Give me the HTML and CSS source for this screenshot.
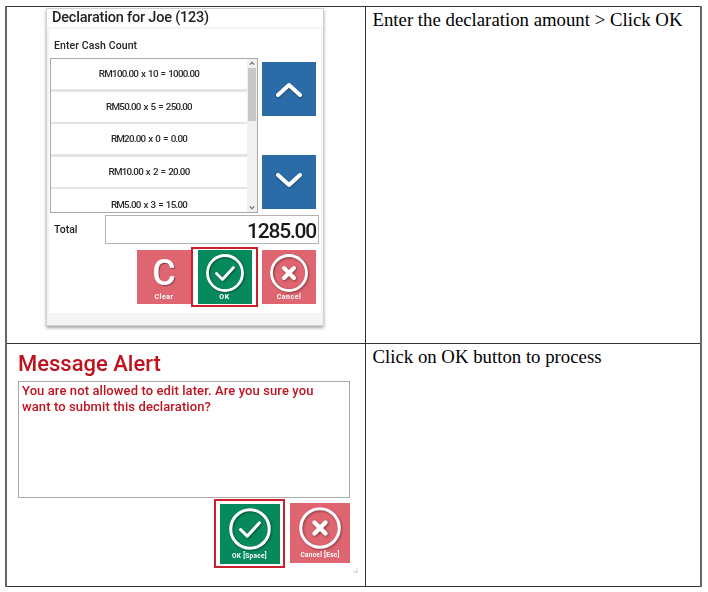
FILE: index.html
```html
<!DOCTYPE html>
<html lang="en">
<head>
    <meta charset="UTF-8">
    <meta name="viewport" content="width=device-width, initial-scale=1.0">
    <title>Declaration steps</title>
    <link rel="stylesheet" href="styles.css">
</head>
<body>
    <table class="steps">
        <tr class="row-first">
            <td class="shot-cell">
                <div class="dialog">
                    <div class="dialog-title">Declaration for Joe (123)</div>
                    <div class="dialog-body">
                        <div class="count-label">Enter Cash Count</div>
                        <div class="count-area">
                            <div class="count-list">
                                <div class="count-items">
                                    <div class="count-item">RM100.00 x 10 = 1000.00</div>
                                    <div class="count-item">RM50.00 x 5 = 250.00</div>
                                    <div class="count-item">RM20.00 x 0 = 0.00</div>
                                    <div class="count-item">RM10.00 x 2 = 20.00</div>
                                    <div class="count-item count-item-cut">RM5.00 x 3 = 15.00</div>
                                </div>
                                <div class="scrollbar">
                                    <svg class="scroll-arrow" viewBox="0 0 8 8"><path d="M2 5l2-2 2 2"></path></svg>
                                    <div class="scroll-track"><div class="scroll-thumb"></div></div>
                                    <svg class="scroll-arrow" viewBox="0 0 8 8"><path d="M2 3l2 2 2-2"></path></svg>
                                </div>
                            </div>
                            <div class="pager">
                                <button class="page-button" aria-label="Up">
                                    <svg viewBox="0 0 54 54"><path d="M16 33l11-10 11 10"></path></svg>
                                </button>
                                <button class="page-button" aria-label="Down">
                                    <svg viewBox="0 0 54 54"><path d="M16 20l11 10 11-10"></path></svg>
                                </button>
                            </div>
                        </div>
                        <div class="total-row">
                            <div class="total-label">Total</div>
                            <div class="total-value">1285.00</div>
                        </div>
                        <div class="action-row">
                            <button class="action action-red">
                                <span class="clear-glyph">C</span>
                                <span class="action-label">Clear</span>
                            </button>
                            <div class="focus-ring">
                                <button class="action action-green">
                                    <svg class="action-icon" viewBox="0 0 40 40"><circle cx="20" cy="20" r="17.5"></circle><path d="M11.5 20.5l6 6 11-12"></path></svg>
                                    <span class="action-label">OK</span>
                                </button>
                            </div>
                            <button class="action action-red">
                                <svg class="action-icon icon-cross" viewBox="0 0 40 40"><circle cx="20" cy="20" r="17.5"></circle><path d="M15 15l10 10M25 15l-10 10"></path></svg>
                                <span class="action-label">Cancel</span>
                            </button>
                        </div>
                    </div>
                    <div class="dialog-foot"></div>
                </div>
            </td>
            <td class="note-cell">Enter the declaration amount &gt; Click OK</td>
        </tr>
        <tr class="row-second">
            <td class="shot-cell">
                <div class="alert">
                    <div class="alert-title">Message Alert</div>
                    <div class="alert-box">You are not allowed to edit later. Are you sure you want to submit this declaration?</div>
                    <div class="alert-actions">
                        <div class="focus-ring focus-ring-large">
                            <button class="action action-large action-green">
                                <svg class="action-icon" viewBox="0 0 40 40"><circle cx="20" cy="20" r="17.5"></circle><path d="M11.5 20.5l6 6 11-12"></path></svg>
                                <span class="action-label">OK [Space]</span>
                            </button>
                        </div>
                        <button class="action action-large action-red">
                            <svg class="action-icon icon-cross" viewBox="0 0 40 40"><circle cx="20" cy="20" r="17.5"></circle><path d="M15 15l10 10M25 15l-10 10"></path></svg>
                            <span class="action-label">Cancel [Esc]</span>
                        </button>
                    </div>
                    <svg class="resize-grip" viewBox="0 0 6 6"><path d="M5 1v4H1M5 3.5v1.5H3.5"></path></svg>
                </div>
            </td>
            <td class="note-cell">Click on OK button to process</td>
        </tr>
    </table>
</body>
</html>
```

FILE: styles.css
```css
* {
    margin: 0;
    padding: 0;
    box-sizing: border-box;
}

body {
    background: #fff;
    padding: 6px 0 0 5px;
    font-family: "Roboto", "Liberation Sans", sans-serif;
}

.steps {
    border-collapse: collapse;
    table-layout: fixed;
    width: 697px;
}

.steps td {
    border: 1px solid #333;
    vertical-align: top;
}

.steps tr td:first-child {
    width: 359px;
    border-left: 2px solid #666;
}

.steps tr td:last-child {
    border-right: 2px solid #666;
}

.row-first {
    height: 337px;
}

.row-second {
    height: 243px;
}

.note-cell {
    padding: 2px 0 0 7px;
    font-family: "Liberation Serif", serif;
    font-size: 18.8px;
    line-height: 22px;
    color: #000;
}

.dialog {
    width: 278px;
    height: 318px;
    margin: 1px 0 0 39px;
    background: #f4f4f4;
    border: 1px solid #d0d0d0;
    box-shadow: 0 2px 3px rgba(0, 0, 0, 0.35);
    display: flex;
    flex-direction: column;
    filter: blur(0.4px);
}

.dialog-title {
    height: 18px;
    padding-left: 5px;
    background: #fff;
    font-size: 14.5px;
    font-weight: 500;
    line-height: 18px;
    letter-spacing: -0.2px;
    color: #222;
}

.dialog-body {
    height: 284px;
    margin: 2px 2px 0;
    padding: 0 1px;
    background: #fff;
}

.count-label {
    height: 29px;
    padding: 10px 0 0 4px;
    font-size: 10.5px;
    font-weight: 500;
    line-height: 14px;
    letter-spacing: 0.1px;
    color: #222;
}

.count-area {
    display: flex;
    gap: 4px;
    height: 155px;
}

.count-list {
    width: 208px;
    height: 155px;
    border: 1px solid #a8a8a8;
    display: flex;
    overflow: hidden;
}

.count-items {
    width: 196px;
    flex: none;
    display: flex;
    flex-direction: column;
    gap: 2.5px;
    background: #e4e4e4;
}

.count-item {
    flex: none;
    height: 30px;
    background: #fff;
    text-align: center;
    font-size: 9.8px;
    font-weight: 500;
    line-height: 30px;
    letter-spacing: -0.75px;
    word-spacing: 1.2px;
    color: #2a2a2a;
}

.count-item-cut {
    padding-top: 1px;
}

.scrollbar {
    flex: 1;
    display: flex;
    flex-direction: column;
    background: #f0f0f0;
}

.scroll-arrow {
    width: 10px;
    height: 9px;
    flex: none;
    fill: none;
    stroke: #666;
    stroke-width: 1;
}

.scroll-track {
    flex: 1;
}

.scroll-thumb {
    width: 8px;
    height: 53px;
    margin-left: 1px;
    background: #c8c8c8;
}

.pager {
    width: 54px;
    height: 147px;
    margin-top: 4px;
    display: flex;
    flex-direction: column;
    justify-content: space-between;
}

.page-button {
    width: 54px;
    height: 54px;
    border: none;
    background: #2b6ca8;
    display: block;
}

.page-button svg {
    width: 54px;
    height: 54px;
    display: block;
    fill: none;
    stroke: #fff;
    stroke-width: 4;
    stroke-linecap: round;
    stroke-linejoin: round;
    filter: drop-shadow(0 1px 1px rgba(0, 0, 0, 0.35));
}

.total-row {
    display: flex;
    align-items: center;
    height: 30px;
    margin-top: 1px;
}

.total-label {
    width: 55px;
    padding-left: 4px;
    font-size: 10.5px;
    font-weight: 500;
    color: #222;
}

.total-value {
    width: 214px;
    height: 29px;
    padding-right: 2px;
    border: 1px solid #b4b4b4;
    text-align: right;
    font-size: 21px;
    font-weight: 500;
    line-height: 30px;
    letter-spacing: -1.2px;
    color: #1a1a1a;
}

.action-row {
    display: flex;
    justify-content: flex-end;
    align-items: center;
    height: 62px;
    padding-right: 4px;
    margin-top: 2px;
}

.action {
    width: 54px;
    height: 54px;
    border: none;
    color: #fff;
    display: flex;
    flex-direction: column;
    align-items: center;
    font-family: inherit;
}

.action-red {
    background: #df6570;
}

.action-green {
    background: #078a5b;
}

.focus-ring {
    width: 67px;
    height: 60px;
    border: 2px solid #c9202c;
    display: flex;
    align-items: center;
    justify-content: center;
    margin: 0 4px 0 0;
    background: #fff;
}

.action-icon {
    width: 40px;
    height: 40px;
    margin-top: 3px;
    flex: none;
    fill: none;
    stroke: #fff;
    stroke-width: 2.8;
    stroke-linecap: round;
    stroke-linejoin: round;
    filter: drop-shadow(1px 1px 1px rgba(0, 0, 0, 0.4));
}

.icon-cross path {
    stroke-width: 4;
}

.clear-glyph {
    height: 43px;
    font-size: 36px;
    font-weight: 500;
    line-height: 47px;
    text-shadow: 1px 1px 1px rgba(0, 0, 0, 0.4);
}

.action-label {
    font-size: 7px;
    font-weight: 700;
    line-height: 9px;
    letter-spacing: 0.5px;
    white-space: nowrap;
}

.alert {
    padding: 7px 0 0 11px;
    position: relative;
    height: 241px;
    filter: blur(0.4px);
}

.alert-title {
    height: 30px;
    font-size: 22px;
    font-weight: 500;
    line-height: 25px;
    color: #bf1320;
}

.alert-box {
    width: 332px;
    height: 117px;
    padding: 1px 30px 0 3px;
    border: 1px solid #aaa;
    font-size: 13px;
    font-weight: 500;
    line-height: 16px;
    letter-spacing: 0.1px;
    color: #bf1320;
}

.alert-actions {
    width: 332px;
    display: flex;
    justify-content: flex-end;
    align-items: flex-start;
    gap: 5px;
}

.focus-ring-large {
    width: 71px;
    height: 69px;
    margin: 1px 0 0;
}

.action-large {
    width: 60px;
    height: 60px;
    margin-top: 5px;
}

.focus-ring-large .action-large {
    margin-top: 0;
}

.action-large .action-icon {
    width: 44px;
    height: 44px;
}

.action-large .action-label {
    line-height: 10px;
    font-size: 6.5px;
    letter-spacing: 0.3px;
}

.resize-grip {
    position: absolute;
    right: 7px;
    bottom: 12px;
    width: 6px;
    height: 6px;
    fill: none;
    stroke: #bbb;
    stroke-width: 0.6;
}
```
